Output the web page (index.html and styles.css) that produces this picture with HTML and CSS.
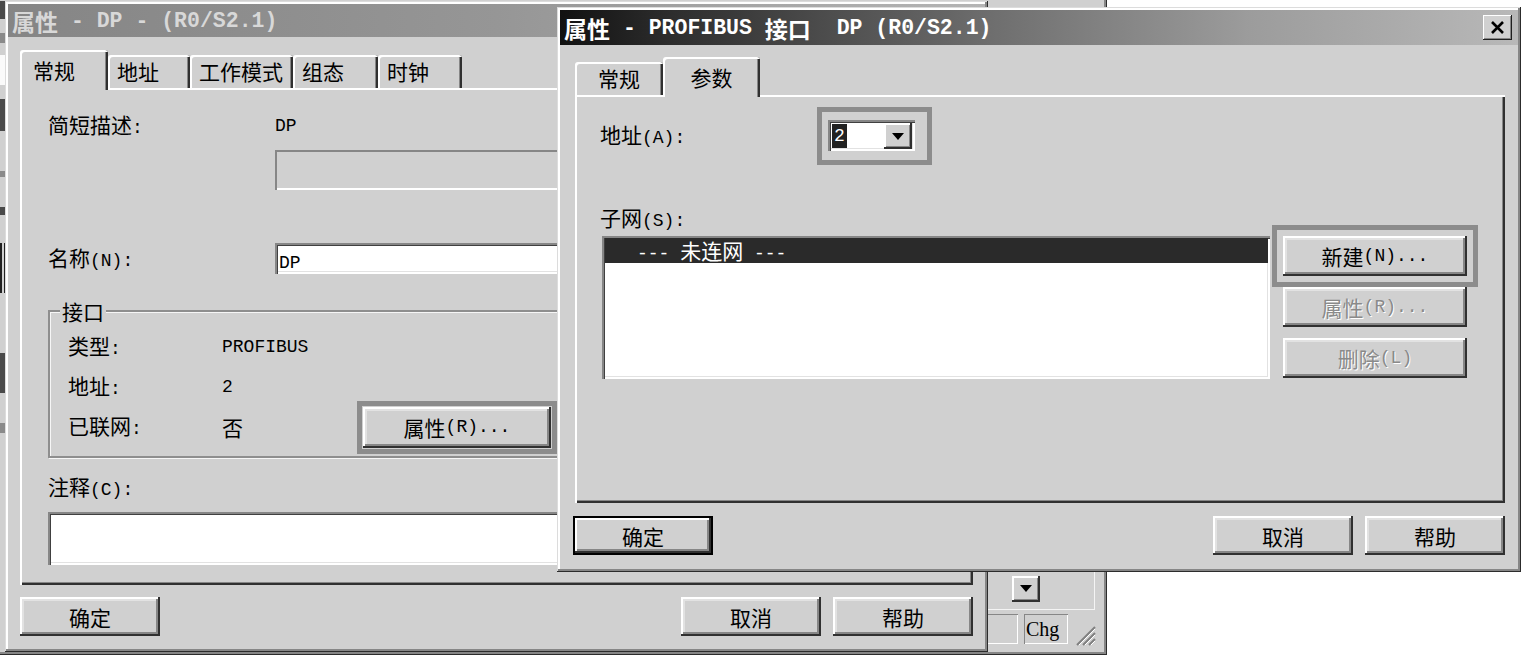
FILE: index.html
```html
<!DOCTYPE html>
<html lang="zh-CN">
<head>
    <meta charset="UTF-8">
    <meta name="viewport" content="width=device-width, initial-scale=1.0">
    <title>属性 - PROFIBUS 接口 DP (R0/S2.1)</title>
    <link rel="stylesheet" href="styles.css">
</head>
<body>
    <!-- window lying behind both dialogs -->
    <div class="win back-win">
        <div class="edge-bits">
            <i class="eb eb-dark" style="height:18px"></i>
            <i class="eb eb-gap" style="height:14px"></i>
            <i class="eb eb-mid" style="height:10px"></i>
            <i class="eb eb-gap" style="height:12px"></i>
            <i class="eb eb-white" style="height:30px"></i>
            <i class="eb eb-gap" style="height:14px"></i>
            <i class="eb eb-dark" style="height:32px"></i>
            <i class="eb eb-gap" style="height:40px"></i>
            <i class="eb eb-mid" style="height:6px"></i>
            <i class="eb eb-gap" style="height:30px"></i>
            <i class="eb eb-dark" style="height:8px"></i>
            <i class="eb eb-gap" style="height:28px"></i>
            <i class="eb eb-line" style="height:50px"></i>
            <i class="eb eb-gap" style="height:60px"></i>
            <i class="eb eb-dark" style="height:40px"></i>
            <i class="eb eb-gap" style="height:30px"></i>
            <i class="eb eb-mid" style="height:10px"></i>
        </div>
        <div class="back-tool">
            <div class="tool-frame">
                <span class="drop-btn">
                    <svg width="12" height="7" viewBox="0 0 12 7"><path d="M0 0h12L6 7z" fill="#000"/></svg>
                </span>
            </div>
        </div>
        <div class="status-bar">
            <span class="sb-panel sb-wide"></span>
            <span class="sb-panel"><span class="a">Chg</span></span>
            <span class="grip">
                <svg width="22" height="22" viewBox="0 0 22 22">
                    <path d="M21 3L3 21M21 9L9 21M21 15L15 21" stroke="#808080" stroke-width="2"/>
                    <path d="M21 5L5 21M21 11L11 21M21 17L17 21" stroke="#fff" stroke-width="1"/>
                </svg>
            </span>
        </div>
    </div>

    <!-- object properties dialog -->
    <div class="win dlg-main">
        <div class="title"><span>属性</span><span class="a"> - DP - (R0/S2.1)</span></div>
        <div class="dlg-body">
            <div class="tabs">
                <div class="tab sel" style="width:88px">常规</div>
                <div class="tab" style="width:82px">地址</div>
                <div class="tab" style="width:103px">工作模式</div>
                <div class="tab" style="width:85px">组态</div>
                <div class="tab" style="width:84px">时钟</div>
            </div>
            <div class="panel panel-main">
                <div class="field-row short-row">
                    <span class="lbl">简短描述<span class="a">:</span></span>
                    <span class="a">DP</span>
                </div>
                <div class="edit edit-disabled desc-box"></div>
                <div class="field-row name-row">
                    <span class="lbl">名称<span class="a">(N):</span></span>
                    <div class="edit name-box"><span class="a">DP</span></div>
                </div>
                <div class="group">
                    <span class="legend">接口</span>
                    <div class="group-grid">
                        <span>类型<span class="a">:</span></span><span class="a">PROFIBUS</span><span></span>
                        <span>地址<span class="a">:</span></span><span class="a">2</span><span></span>
                        <span>已联网<span class="a">:</span></span><span>否</span>
                        <button class="btn btn-prop mark">属性<span class="a">(R)...</span></button>
                    </div>
                </div>
                <div class="comment-lbl">注释<span class="a">(C):</span></div>
                <div class="edit comment-box"></div>
            </div>
            <div class="btn-row">
                <button class="btn">确定</button>
                <span class="grow"></span>
                <button class="btn">取消</button>
                <button class="btn">帮助</button>
            </div>
        </div>
    </div>

    <!-- PROFIBUS interface dialog (active) -->
    <div class="win dlg-iface">
        <div class="title active">
            <span>属性</span><span class="a"> - PROFIBUS </span><span>接口</span><span class="a">  DP (R0/S2.1)</span>
            <span class="grow"></span>
            <span class="close-btn">
                <svg width="15" height="13" viewBox="0 0 15 13"><path d="M2 1L13 12M13 1L2 12" stroke="#000" stroke-width="2.6"/></svg>
            </span>
        </div>
        <div class="dlg-body">
            <div class="tabs">
                <div class="tab centered" style="width:88px">常规</div>
                <div class="tab sel centered" style="width:97px">参数</div>
            </div>
            <div class="panel panel-iface">
                <div class="field-row addr-row">
                    <span class="lbl">地址<span class="a">(A):</span></span>
                    <div class="mark-box">
                        <div class="combo">
                            <span class="combo-val"><span class="a">2</span></span>
                            <span class="drop-btn">
                                <svg width="12" height="7" viewBox="0 0 12 7"><path d="M0 0h12L6 7z" fill="#000"/></svg>
                            </span>
                        </div>
                    </div>
                </div>
                <div class="subnet-lbl">子网<span class="a">(S):</span></div>
                <div class="list-row">
                    <div class="listbox">
                        <div class="list-item sel"><span class="a">--- </span>未连网<span class="a"> ---</span></div>
                    </div>
                    <div class="side-btns">
                        <button class="btn btn-side mark-wide">新建<span class="a">(N)...</span></button>
                        <button class="btn btn-side disabled">属性<span class="a">(R)...</span></button>
                        <button class="btn btn-side disabled">删除<span class="a">(L)</span></button>
                    </div>
                </div>
            </div>
            <div class="btn-row">
                <button class="btn btn-default">确定</button>
                <span class="grow"></span>
                <button class="btn">取消</button>
                <button class="btn">帮助</button>
            </div>
        </div>
    </div>
</body>
</html>
```

FILE: styles.css
```css
:root {
    --face: #d0d0d0;
    --light: #ffffff;
    --soft: #e2e2e2;
    --shadow: #868686;
    --dark: #383838;
    --mark: #8c8c8c;
}

* {
    box-sizing: border-box;
    margin: 0;
    padding: 0;
}

body {
    width: 1523px;
    height: 657px;
    overflow: hidden;
    position: relative;
    background: #ffffff;
    font-family: "Noto Sans CJK SC", sans-serif;
    font-size: 21px;
    line-height: 24px;
    color: #000;
}

/* half-width latin part of the SimSun look */
.a {
    font-family: "Liberation Mono", monospace;
    font-size: 18px;
    white-space: pre;
}

.grow {
    flex: 1;
}

/* windows */
.win {
    position: absolute;
    background: var(--face);
    padding: 3px;
    display: flex;
    flex-direction: column;
    box-shadow: inset -1px -1px #2c2c2c, inset 1px 1px #dcdcdc, inset -3px -3px var(--shadow), inset 3px 3px var(--light);
}

.back-win {
    left: -10px;
    top: -10px;
    width: 1117px;
    height: 665px;
    display: grid;
    grid-template-columns: 12px 1fr;
    grid-template-rows: 1fr 38px 42px;
}

.dlg-main {
    left: 5px;
    top: 1px;
    width: 983px;
    height: 651px;
}

.dlg-iface {
    left: 557px;
    top: 7px;
    width: 964px;
    height: 565px;
}

.title {
    height: 33px;
    flex-shrink: 0;
    display: flex;
    align-items: center;
    padding: 0 6px 0 4px;
    font-size: 23px;
    font-weight: bold;
    color: #d8d8d8;
    background: linear-gradient(90deg, #858585, #969696 50%, #b4b4b4);
}

.title .a {
    font-size: 21.5px;
    font-weight: bold;
}

.title.active {
    height: 35px;
    color: #fff;
    background: linear-gradient(90deg, #111 0%, #2e2e2e 12%, #6e6e6e 45%, #9c9c9c 72%, #b8b8b8 100%);
}

.close-btn {
    width: 29px;
    height: 25px;
    display: flex;
    align-items: center;
    justify-content: center;
    background: var(--face);
    box-shadow: inset -1px -1px #202020, inset 1px 1px var(--light), inset -2px -2px var(--shadow);
}

.dlg-main .dlg-body {
    padding: 13px 12px 0 12px;
}

.dlg-iface .dlg-body {
    padding: 12px 13px 0 15px;
}

/* tabs */
.tabs {
    display: flex;
    align-items: flex-end;
    height: 38px;
    position: relative;
    z-index: 1;
}

.tab {
    height: 33px;
    padding: 4px 0 0 9px;
    background: var(--face);
    border-radius: 3px 3px 0 0;
    box-shadow: inset 2px 2px var(--light), inset -2px 0 #303030, inset -3px 0 var(--shadow);
}

.tab.sel {
    height: 40px;
    margin-bottom: -2px;
    padding: 8px 0 0 13px;
}

.tab.centered {
    padding-left: 0;
    text-align: center;
}

.panel {
    position: relative;
    background: var(--face);
    box-shadow: inset 2px 2px var(--light), inset -2px -2px #303030, inset -3px -3px var(--shadow);
}

.panel-main {
    height: 497px;
    padding: 24px 13px 0 28px;
}

.panel-iface {
    height: 408px;
    padding: 26px 0 0 25px;
}

/* fields */
.field-row {
    display: flex;
    align-items: center;
}

.lbl {
    width: 227px;
    flex-shrink: 0;
}

.addr-row .lbl {
    width: 217px;
}

.edit {
    background: #fff;
    box-shadow: inset 2px 2px var(--shadow), inset 3px 3px #404040, inset -2px -2px var(--light), inset -3px -3px var(--soft);
}

.edit-disabled {
    background: var(--face);
    box-shadow: inset 2px 2px var(--shadow), inset -2px -2px var(--light);
}

.desc-box {
    margin: 10px 0 0 227px;
    height: 40px;
}

.name-row {
    margin-top: 53px;
}

.name-box {
    flex: 1;
    height: 31px;
    padding: 4px 0 0 4px;
}

.group {
    position: relative;
    height: 148px;
    margin-top: 36px;
    padding: 15px 0 0 18px;
    border: 2px solid #8e8e8e;
    box-shadow: inset 1px 1px #f6f6f6, 1px 1px #f6f6f6;
}

.legend {
    position: absolute;
    top: -13px;
    left: 10px;
    padding: 0 2px;
    background: var(--face);
}

.group-grid {
    display: grid;
    grid-template-columns: 154px 141px auto;
    grid-auto-rows: 40px;
    align-items: center;
}

.comment-lbl {
    margin-top: 16px;
}

.comment-box {
    margin-top: 10px;
    height: 53px;
}

/* buttons */
.btn {
    font: inherit;
    color: #000;
    width: 140px;
    height: 39px;
    border: none;
    padding: 0;
    display: flex;
    align-items: center;
    justify-content: center;
    background: var(--face);
    box-shadow: inset -2px -2px #303030, inset 2px 2px var(--light), inset -4px -4px var(--shadow), inset 4px 4px var(--soft);
}

.btn-default {
    margin-left: -2px;
    box-shadow: inset 0 0 0 2px #000, inset -4px -4px #303030, inset 4px 4px var(--light), inset -6px -6px var(--shadow);
}

.btn-prop {
    width: 188px;
    height: 41px;
}

.btn-side {
    width: 184px;
    height: 40px;
}

.btn.disabled {
    color: #8a8a8a;
    text-shadow: 1px 1px #fff;
}

.btn-row {
    display: flex;
    gap: 12px;
    margin-top: 12px;
}

.dlg-iface .btn-row {
    margin-top: 13px;
}

/* annotation frames drawn over the screenshot */
.mark {
    outline: 5px solid var(--mark);
    outline-offset: 1px;
}

.mark-wide {
    outline: 5px solid var(--mark);
    outline-offset: 6px;
}

.mark-box {
    padding: 8px 12px 9px 6px;
    border: 5px solid var(--mark);
    margin: -14px 0;
}

/* combo */
.combo {
    width: 87px;
    height: 31px;
    display: flex;
    padding: 3px;
    background: #fff;
    box-shadow: inset 2px 2px var(--shadow), inset 3px 3px #404040, inset -2px -2px var(--light), inset -3px -3px var(--soft);
}

.combo-val {
    flex: 1;
    display: flex;
    align-items: center;
    padding-left: 1px;
}

.combo-val .a {
    background: #222;
    color: #fff;
    padding: 0 2px;
}

.drop-btn {
    width: 28px;
    height: 26px;
    display: flex;
    align-items: center;
    justify-content: center;
    background: var(--face);
    box-shadow: inset -2px -2px #303030, inset 2px 2px var(--light), inset -3px -3px var(--shadow);
}

.subnet-lbl {
    margin-top: 54px;
}

.list-row {
    display: flex;
    align-items: flex-start;
    gap: 13px;
    margin: 3px 0 0 2px;
}

.listbox {
    width: 668px;
    height: 143px;
    padding: 2px 2px 0 3px;
    background: #fff;
    box-shadow: inset 2px 2px var(--shadow), inset 3px 3px #404040, inset -2px -2px var(--light), inset -3px -3px var(--soft);
}

.list-item {
    height: 25px;
    padding-left: 32px;
    line-height: 25px;
}

.list-item.sel {
    background: #2a2a2a;
    color: #fff;
}

.side-btns {
    display: flex;
    flex-direction: column;
    gap: 11px;
    margin-top: 0;
}

/* behind-window parts */
.edge-bits {
    grid-row: 1 / 4;
    grid-column: 1;
    display: flex;
    flex-direction: column;
    padding: 8px 0 0 7px;
}

.eb {
    display: block;
    width: 5px;
    flex-shrink: 0;
}

.eb-dark { background: #4a4a4a; }
.eb-mid { background: #8a8a8a; }
.eb-white { background: #fafafa; }
.eb-gap { background: transparent; }
.eb-line { border-left: 2px solid #222; border-right: 1px solid #222; }

.back-tool {
    grid-row: 2;
    grid-column: 2;
    display: flex;
    justify-content: flex-end;
    padding-right: 9px;
}

.tool-frame {
    width: 110px;
    display: flex;
    align-items: center;
    padding: 0 0 4px 27px;
    border-right: 1px solid #f4f4f4;
    border-bottom: 1px solid #f4f4f4;
}

.status-bar {
    grid-row: 3;
    grid-column: 2;
    display: flex;
    align-items: center;
    justify-content: flex-end;
    gap: 6px;
    padding: 0 6px 4px 0;
}

.sb-panel {
    height: 30px;
    min-width: 44px;
    display: flex;
    align-items: center;
    padding: 0 2px;
    box-shadow: inset 1px 1px var(--shadow), inset -1px -1px var(--light);
}

.sb-panel .a {
    font-family: "Liberation Serif", serif;
    font-size: 20px;
}

.sb-wide {
    width: 200px;
}

.grip {
    width: 24px;
    height: 24px;
    align-self: flex-end;
}
```
